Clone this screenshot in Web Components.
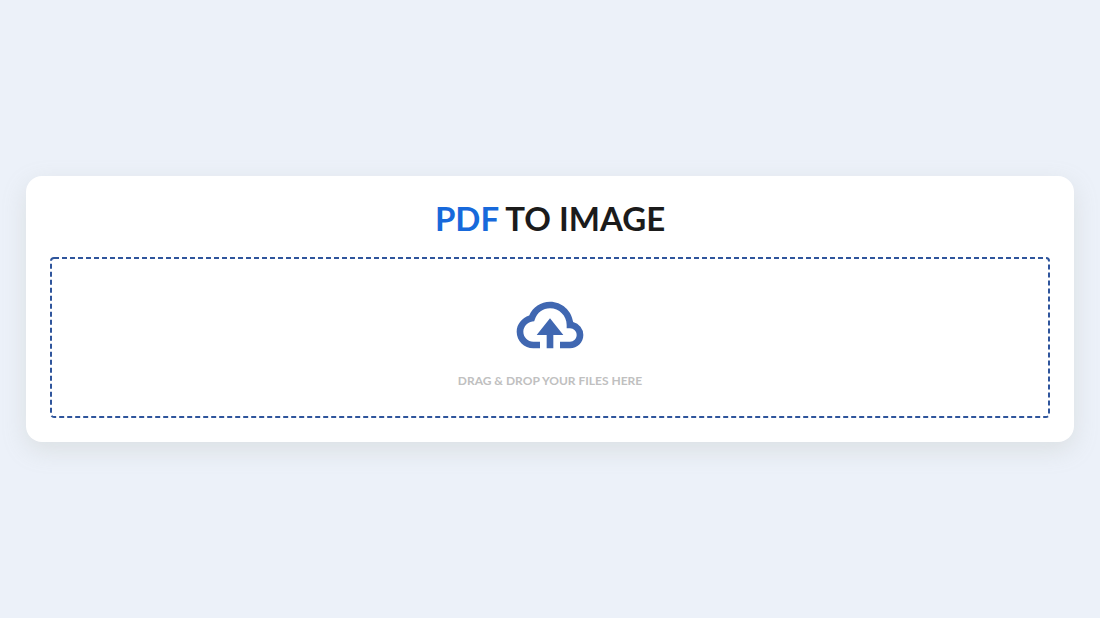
<!DOCTYPE html>
<html lang="en">
<head>
<meta charset="utf-8">
<meta name="viewport" content="width=device-width, initial-scale=1">
<title>PDF to Image</title>
<style>
  body {
    margin: 0;
    min-height: 100vh;
    display: grid;
    align-items: center;
    background: #ecf1f9;
    font-family: Lato, "Open Sans", sans-serif;
    color: #1b1b1b;
  }
  .accent { color: #1769db; }
</style>
</head>
<body>
<converter-card>
  <span slot="title"><span class="accent">PDF</span> TO IMAGE</span>
  <drop-zone>DRAG &amp; DROP YOUR FILES HERE</drop-zone>
</converter-card>

<script>
class ConverterCard extends HTMLElement {
  constructor() {
    super();
    this.attachShadow({ mode: 'open' }).innerHTML = `
      <style>
        :host {
          display: block;
          box-sizing: border-box;
          margin: 0 26px;
          padding: 24px;
          border-radius: 16px;
          background: #fff;
          box-shadow: 0 8px 24px rgba(160, 165, 150, .22);
        }
        h1 {
          margin: 0 0 20px;
          font-size: 33px;
          line-height: 37px;
          font-weight: 700;
          text-align: center;
        }
      </style>
      <h1><slot name="title"></slot></h1>
      <slot></slot>`;
  }
}

class UploadIcon extends HTMLElement {
  constructor() {
    super();
    this.attachShadow({ mode: 'open' }).innerHTML = `
      <style>
        :host { display: block; color: #4067b1; }
        svg { display: block; width: 80px; height: 80px; fill: currentColor; }
      </style>
      <svg viewBox="0 0 24 24" aria-hidden="true">
        <path d="M13 19v-4h3l-4-5-4 5h3v4z"/>
        <path d="M7 19h2v-2H7c-1.654 0-3-1.346-3-3 0-1.404 1.199-2.756 2.673-3.015l.581-.102.192-.558C8.149 8.274 9.895 7 12 7c2.757 0 5 2.243 5 5v1h1c1.103 0 2 .897 2 2s-.897 2-2 2h-3v2h3c2.206 0 4-1.794 4-4a4.01 4.01 0 0 0-3.056-3.888C18.507 7.67 15.56 5 12 5 9.244 5 6.85 6.611 5.757 9.15 3.609 9.792 2 11.82 2 14c0 2.757 2.243 5 5 5z"/>
      </svg>`;
  }
}

class DropZone extends HTMLElement {
  constructor() {
    super();
    this.attachShadow({ mode: 'open' }).innerHTML = `
      <style>
        :host { display: block; position: relative; }
        label {
          display: flex;
          flex-direction: column;
          align-items: center;
          gap: 7px;
          padding: 28px 0;
          cursor: pointer;
          font-size: 12px;
          line-height: 18px;
          font-weight: 700;
          color: #c0c0c0;
        }
        /* Outline with its own dash rhythm, kept around the whole zone */
        .outline {
          position: absolute;
          inset: 0;
          width: 100%;
          height: 100%;
          overflow: visible;
          pointer-events: none;
        }
        .outline rect {
          fill: none;
          stroke: #2f559c;
          stroke-width: 2px;
          stroke-dasharray: 5 3;
          x: 1px;
          y: 1px;
          width: calc(100% - 2px);
          height: calc(100% - 2px);
          rx: 3px;
        }
        input {
          position: absolute;
          inset: 0;
          width: 100%;
          height: 100%;
          opacity: 0;
          cursor: pointer;
        }
      </style>
      <svg class="outline" aria-hidden="true"><rect/></svg>
      <label for="file"><upload-icon></upload-icon><span><slot></slot></span></label>
      <input id="file" type="file" accept="application/pdf">`;
  }
}

customElements.define('upload-icon', UploadIcon);
customElements.define('drop-zone', DropZone);
customElements.define('converter-card', ConverterCard);
</script>
</body>
</html>
